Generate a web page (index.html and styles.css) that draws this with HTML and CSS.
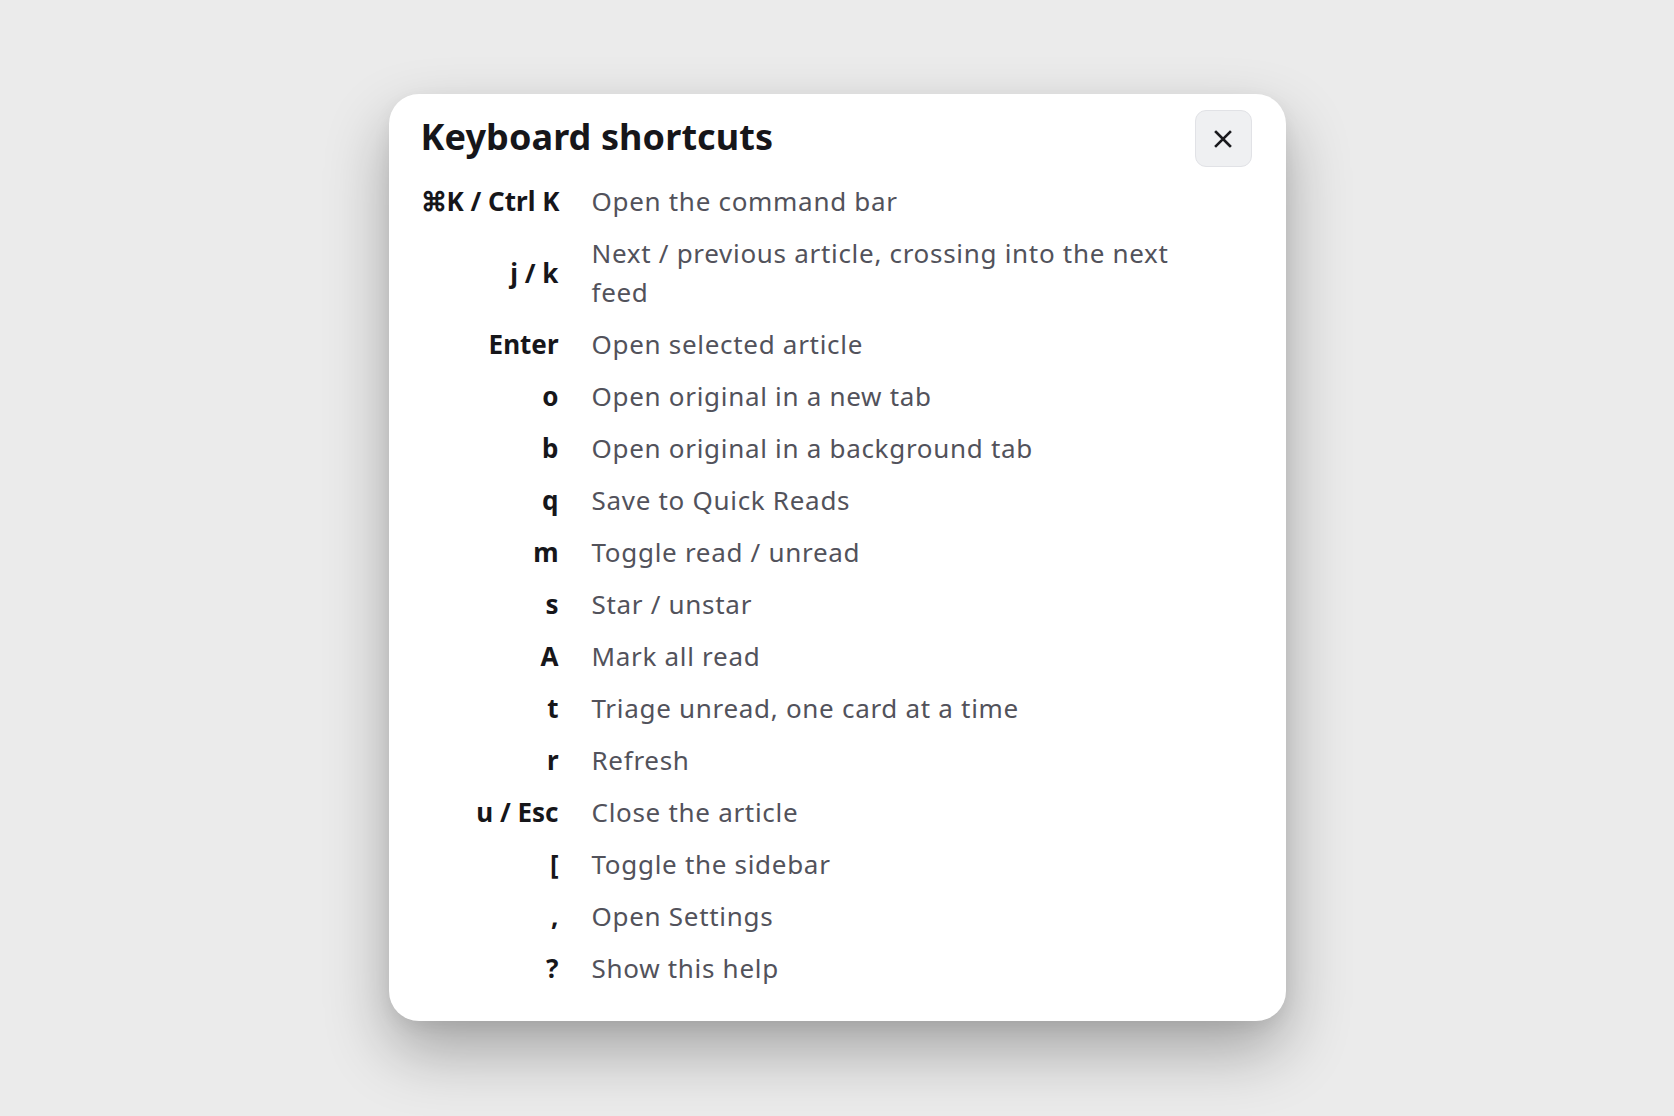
FILE: index.html
```html
<!DOCTYPE html>
<html lang="en">
<head>
<meta charset="utf-8">
<title>Keyboard shortcuts</title>
<link rel="stylesheet" href="styles.css">
</head>
<body>
<div class="backdrop">
  <div class="dialog" role="dialog" aria-label="Keyboard shortcuts">
    <div class="dialog-header">
      <h2 class="dialog-title">Keyboard shortcuts</h2>
      <button class="close-btn" aria-label="Close">
        <svg width="20" height="20" viewBox="0 0 20 20" fill="none" stroke="#1a1a1e" stroke-width="2.6" stroke-linecap="square"><path d="M3 3L17 17M17 3L3 17"/></svg>
      </button>
    </div>
    <dl class="shortcut-list">
      <dt class="key">⌘K / Ctrl K</dt><dd class="desc">Open the command bar</dd>
      <dt class="key">j / k</dt><dd class="desc">Next / previous article, crossing into the next feed</dd>
      <dt class="key">Enter</dt><dd class="desc">Open selected article</dd>
      <dt class="key">o</dt><dd class="desc">Open original in a new tab</dd>
      <dt class="key">b</dt><dd class="desc">Open original in a background tab</dd>
      <dt class="key">q</dt><dd class="desc">Save to Quick Reads</dd>
      <dt class="key">m</dt><dd class="desc">Toggle read / unread</dd>
      <dt class="key">s</dt><dd class="desc">Star / unstar</dd>
      <dt class="key">A</dt><dd class="desc">Mark all read</dd>
      <dt class="key">t</dt><dd class="desc">Triage unread, one card at a time</dd>
      <dt class="key">r</dt><dd class="desc">Refresh</dd>
      <dt class="key">u / Esc</dt><dd class="desc">Close the article</dd>
      <dt class="key">[</dt><dd class="desc">Toggle the sidebar</dd>
      <dt class="key">,</dt><dd class="desc">Open Settings</dd>
      <dt class="key">?</dt><dd class="desc">Show this help</dd>
    </dl>
  </div>
</div>
</body>
</html>
```
FILE: styles.css
```css
html, body {
  margin: 0;
  padding: 0;
  background: #ebebeb;
  font-family: "Noto Sans", "Open Sans", sans-serif;
}
.backdrop {
  min-height: 1116px;
  display: flex;
  justify-content: center;
  align-items: flex-start;
  padding-top: 94px;
  box-sizing: border-box;
}
.dialog {
  width: 897px;
  box-sizing: border-box;
  background: #ffffff;
  border-radius: 30px;
  padding: 16px 34px 33px 32px;
  box-shadow: 0 30px 64px rgba(0, 0, 0, 0.3), 0 6px 18px rgba(0, 0, 0, 0.06);
}
.dialog-header {
  display: flex;
  justify-content: space-between;
  align-items: center;
  height: 57px;
}
.dialog-title {
  margin: 0 0 4px 0;
  font-size: 36px;
  font-weight: 700;
  color: #16161a;
  letter-spacing: 0.1px;
}
.close-btn {
  width: 57px;
  height: 57px;
  border-radius: 11px;
  background: #eff0f2;
  border: 1px solid #e1e2e6;
  display: flex;
  align-items: center;
  justify-content: center;
  padding: 0;
  cursor: pointer;
}
.shortcut-list {
  margin: 15px 0 0 0;
  display: grid;
  grid-template-columns: 138px 612px;
  column-gap: 33px;
  row-gap: 13px;
  align-items: center;
}
.key {
  margin: 0;
  text-align: right;
  font-weight: 700;
  font-size: 26px;
  line-height: 39px;
  color: #16161a;
  white-space: nowrap;
}
.desc {
  margin: 0;
  font-size: 26px;
  line-height: 39px;
  color: #52525b;
  letter-spacing: 0.7px;
}
```
